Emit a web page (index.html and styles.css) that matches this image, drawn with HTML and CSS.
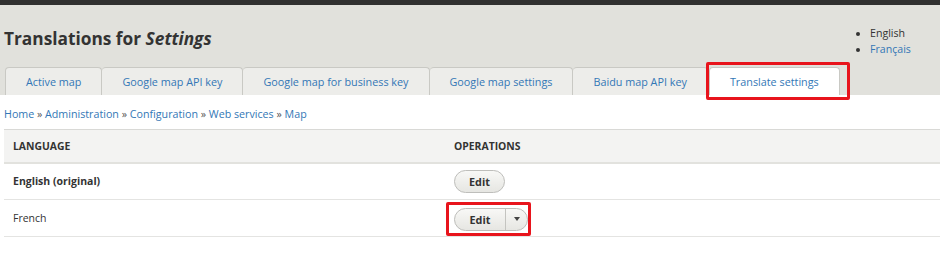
FILE: index.html
```html
<!DOCTYPE html>
<html>
<head>
<meta charset="utf-8">
<link rel="stylesheet" href="styles.css">
</head>
<body>
<div class="topbar"></div>
<header class="header">
  <div class="head-row">
    <h1 class="title">Translations for <em>Settings</em></h1>
    <ul class="langs">
      <li class="lang-current">English</li>
      <li><a href="#">Français</a></li>
    </ul>
  </div>
  <ul class="tabs">
    <li class="tab"><a href="#">Active map</a></li>
    <li class="tab"><a href="#">Google map API key</a></li>
    <li class="tab"><a href="#">Google map for business key</a></li>
    <li class="tab"><a href="#">Google map settings</a></li>
    <li class="tab"><a href="#">Baidu map API key</a></li>
    <li class="tab tab-active"><a href="#">Translate settings</a></li>
  </ul>
</header>
<nav class="breadcrumb">
  <a href="#">Home</a> » <a href="#">Administration</a> » <a href="#">Configuration</a> » <a href="#">Web services</a> » <a href="#">Map</a>
</nav>
<table class="grid">
  <thead>
    <tr><th class="col-lang">Language</th><th>Operations</th></tr>
  </thead>
  <tbody>
    <tr>
      <td class="col-lang strong">English (original)</td>
      <td><span class="btn">Edit</span></td>
    </tr>
    <tr>
      <td class="col-lang">French</td>
      <td><span class="split"><span class="split-main">Edit</span><span class="split-toggle"><span class="caret"></span></span></span></td>
    </tr>
  </tbody>
</table>
</body>
</html>
```

FILE: styles.css
```css
* { box-sizing: border-box; }
body {
  margin: 0;
  background: #fff;
  font-family: "Open Sans", "DejaVu Sans", sans-serif;
  color: #333;
  font-size: 10.6px;
}
a { color: #3377b6; text-decoration: none; }
.topbar { height: 5px; background: #303030; }
.header {
  background: #e1e1dc;
  height: 90px;
  display: flex;
  flex-direction: column;
  justify-content: space-between;
}
.head-row {
  display: flex;
  justify-content: space-between;
  align-items: flex-start;
}
.title {
  margin: 22px 0 0 4px;
  font-size: 17.3px;
  font-weight: 700;
  line-height: 24px;
  color: #333;
}
.title em { font-weight: 700; font-style: italic; }
.langs {
  margin: 20px 10px 0 0;
  padding: 0 0 0 12px;
  font-size: 10.6px;
  line-height: 16px;
  color: #333;
  width: 72px;
}
.langs li { list-style: disc; }
.tabs {
  display: flex;
  margin: 0 0 0 5px;
  padding: 0;
  list-style: none;
  height: 28px;
}
.tab {
  border: 1px solid #c9c9c4;
  border-bottom: none;
  border-left-width: 0;
  background: #ededea;
  border-radius: 4px 4px 0 0;
  font-size: 10.8px;
  display: flex;
  align-items: center;
  padding: 0 20px;
}
.tab:first-child { border-left-width: 1px; }
.tab-active {
  background: #fff;
  margin-left: 1px;
  border-left-width: 1px;
  position: relative;
  padding: 0 20px;
}
.tab-active::after {
  content: "";
  position: absolute;
  left: -4px;
  right: -11px;
  top: -6px;
  bottom: -5px;
  border: 3px solid #e8141c;
  border-radius: 2px;
}
.breadcrumb {
  padding: 12px 4px 0;
  height: 34px;
  font-size: 10.7px;
  color: #555;
}
.grid {
  margin-left: 4px;
  width: 936px;
  border-collapse: collapse;
}
.grid th {
  background: #f3f3f2;
  border-top: 1px solid #d9d9d6;
  border-bottom: 2px solid #e2e2de;
  text-align: left;
  text-transform: uppercase;
  font-size: 10.4px;
  font-weight: 700;
  height: 33px;
  padding: 0 9px;
}
.grid td {
  border-bottom: 1px solid #e4e4e2;
  padding: 0 9px;
  height: 37px;
  font-size: 10.5px;
}
.grid .col-lang { width: 441px; }
.grid td.strong { font-weight: 700; }
.btn, .split {
  display: inline-flex;
  align-items: center;
  height: 23px;
  border: 1px solid #bebebb;
  border-radius: 12px;
  background: linear-gradient(#f8f8f6, #e6e6e2);
  font-size: 10.8px;
  font-weight: 700;
  color: #333;
  vertical-align: middle;
}
.btn { width: 51px; justify-content: center; }
.split { position: relative; top: 1px; }
.split::after {
  content: "";
  position: absolute;
  left: -9px;
  right: -4px;
  top: -7px;
  bottom: -6px;
  border: 3px solid #e8141c;
  border-radius: 2px;
}
.split-main {
  width: 51px;
  text-align: center;
  border-right: 1px solid #c4c4c0;
  height: 100%;
  display: flex;
  align-items: center;
  justify-content: center;
}
.split-toggle {
  width: 21px;
  display: flex;
  align-items: center;
  justify-content: center;
}
.caret {
  width: 0;
  height: 0;
  border-left: 3.5px solid transparent;
  border-right: 3.5px solid transparent;
  border-top: 4px solid #444;
}
```
